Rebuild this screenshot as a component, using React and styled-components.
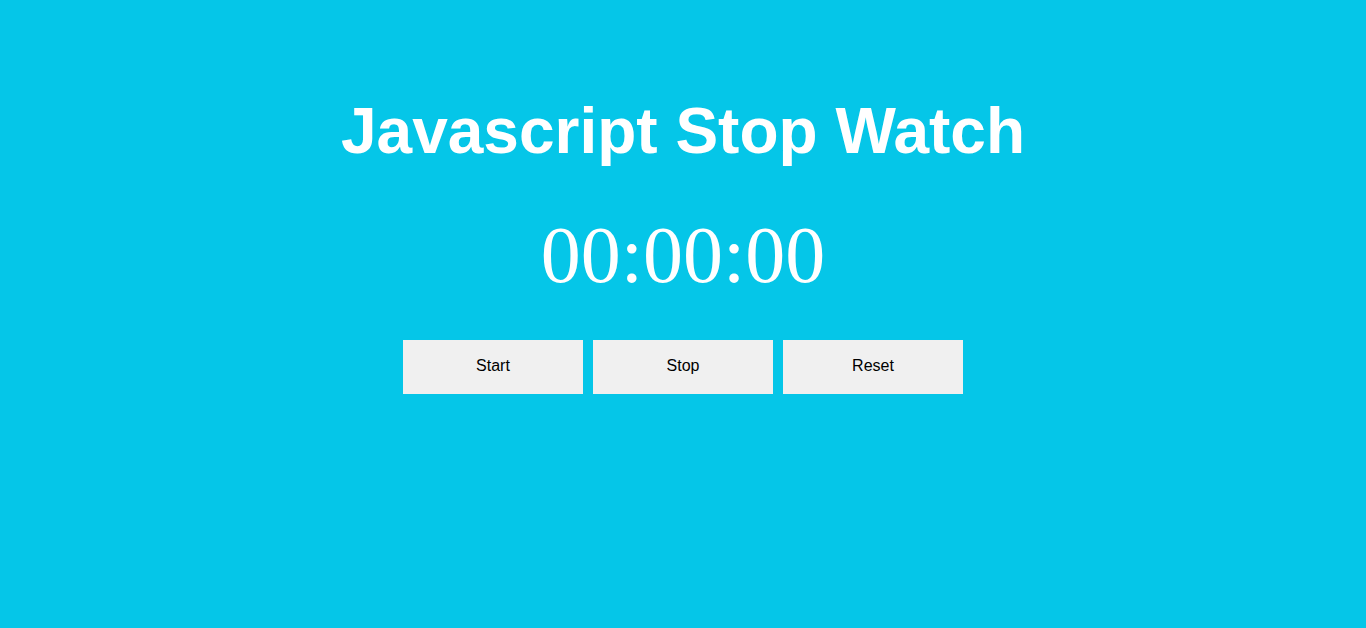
import React, { useState, useRef, useEffect } from "react";
import styled, { createGlobalStyle } from "styled-components";

const GlobalStyle = createGlobalStyle`
  html, body {
    margin: 0;
    padding: 0;
    height: 100%;
    background: #05c6e8;
  }
  #root {
    min-height: 100%;
  }
`;

const Page = styled.div`
  min-height: 628px;
  background: #05c6e8;
  display: flex;
  flex-direction: column;
  align-items: center;
  padding-top: 94px;
  box-sizing: border-box;
`;

const Title = styled.h1`
  margin: 0;
  font-family: "Liberation Sans", Arial, sans-serif;
  font-size: 64px;
  font-weight: 700;
  line-height: 74px;
  color: #ffffff;
`;

const Display = styled.div`
  margin-top: 41px;
  font-family: "Liberation Serif", "Times New Roman", serif;
  font-size: 80px;
  line-height: 92px;
  color: #ffffff;
`;

const Controls = styled.div`
  margin-top: 39px;
  display: flex;
  gap: 10px;
`;

const Button = styled.button`
  width: 180px;
  height: 54px;
  border: none;
  background: #f0f0f0;
  color: #000;
  font-family: "Liberation Sans", Arial, sans-serif;
  font-size: 16px;
  line-height: 18px;
  cursor: pointer;
  padding: 0 0 2px;
  &:hover {
    background: #e6e6e6;
  }
`;

const pad = (n) => String(n).padStart(2, "0");

const App = () => {
  const [ticks, setTicks] = useState(0); // hundredths of a second
  const timer = useRef(null);

  const start = () => {
    if (timer.current) return;
    timer.current = setInterval(() => setTicks((t) => t + 1), 10);
  };
  const stop = () => {
    clearInterval(timer.current);
    timer.current = null;
  };
  const reset = () => {
    stop();
    setTicks(0);
  };

  useEffect(() => stop, []);

  const minutes = Math.floor(ticks / 6000);
  const seconds = Math.floor(ticks / 100) % 60;
  const hundredths = ticks % 100;

  return (
    <>
      <GlobalStyle />
      <Page>
        <Title>Javascript Stop Watch</Title>
        <Display>
          {pad(minutes)}:{pad(seconds)}:{pad(hundredths)}
        </Display>
        <Controls>
          <Button onClick={start}>Start</Button>
          <Button onClick={stop}>Stop</Button>
          <Button onClick={reset}>Reset</Button>
        </Controls>
      </Page>
    </>
  );
};

export default App;
